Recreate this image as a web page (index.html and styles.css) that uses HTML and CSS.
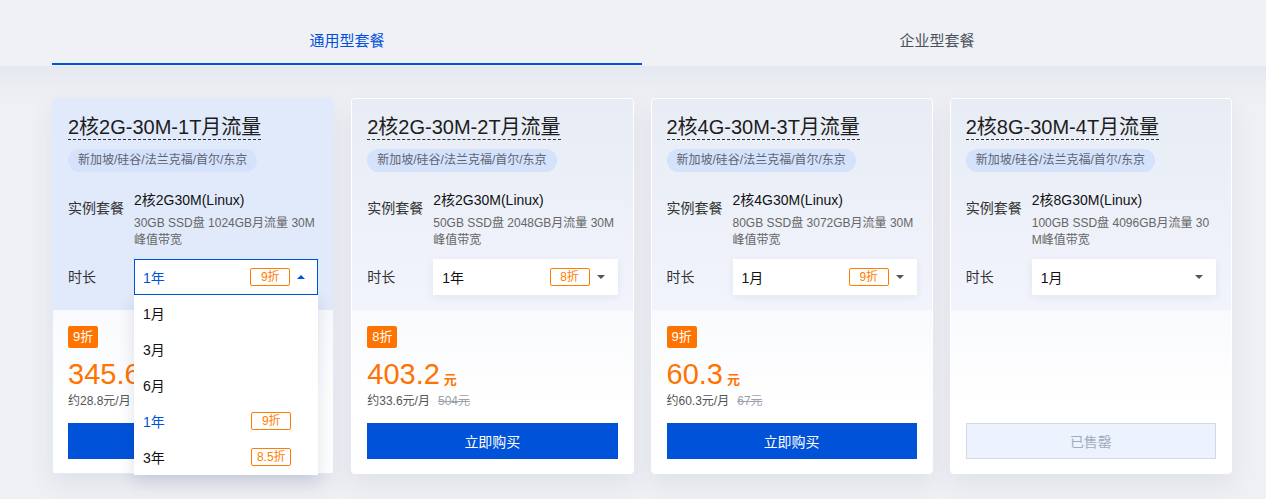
FILE: index.html
```html
<!DOCTYPE html>
<html lang="zh-CN">
<head>
<meta charset="utf-8">
<title>套餐</title>
<link rel="stylesheet" href="styles.css">
</head>
<body>
<div class="tabs">
  <div class="tab active">通用型套餐</div>
  <div class="tab">企业型套餐</div>
</div>
<div class="main">
  <div class="cards">
    <div class="card card-active">
      <div class="card-top">
        <div class="title"><span>2核2G-30M-1T月流量</span></div>
        <div class="tag">新加坡/硅谷/法兰克福/首尔/东京</div>
        <div class="row">
          <div class="label label-top">实例套餐</div>
          <div class="value">
            <div class="spec">2核2G30M(Linux)</div>
            <div class="desc">30GB SSD盘 1024GB月流量 30M峰值带宽</div>
          </div>
        </div>
        <div class="row row-center">
          <div class="label">时长</div>
          <div class="select select-open">
            <span class="sel-text">1年</span>
            <span class="off">9折</span>
            <span class="arrow arrow-up"></span>
            <div class="dropdown">
              <div class="opt">1月</div>
              <div class="opt">3月</div>
              <div class="opt">6月</div>
              <div class="opt opt-on">1年<span class="off">9折</span></div>
              <div class="opt">3年<span class="off">8.5折</span></div>
            </div>
          </div>
        </div>
      </div>
      <div class="card-bottom">
        <div class="badge">9折</div>
        <div class="price">345.6<span class="unit">元</span></div>
        <div class="monthly">约28.8元/月</div>
        <button class="buy">立即购买</button>
      </div>
    </div>

    <div class="card">
      <div class="card-top">
        <div class="title"><span>2核2G-30M-2T月流量</span></div>
        <div class="tag">新加坡/硅谷/法兰克福/首尔/东京</div>
        <div class="row">
          <div class="label label-top">实例套餐</div>
          <div class="value">
            <div class="spec">2核2G30M(Linux)</div>
            <div class="desc">50GB SSD盘 2048GB月流量 30M峰值带宽</div>
          </div>
        </div>
        <div class="row row-center">
          <div class="label">时长</div>
          <div class="select">
            <span class="sel-text">1年</span>
            <span class="off">8折</span>
            <span class="arrow"></span>
          </div>
        </div>
      </div>
      <div class="card-bottom">
        <div class="badge">8折</div>
        <div class="price">403.2<span class="unit">元</span></div>
        <div class="monthly">约33.6元/月<s class="orig">504元</s></div>
        <button class="buy">立即购买</button>
      </div>
    </div>

    <div class="card">
      <div class="card-top">
        <div class="title"><span>2核4G-30M-3T月流量</span></div>
        <div class="tag">新加坡/硅谷/法兰克福/首尔/东京</div>
        <div class="row">
          <div class="label label-top">实例套餐</div>
          <div class="value">
            <div class="spec">2核4G30M(Linux)</div>
            <div class="desc">80GB SSD盘 3072GB月流量 30M峰值带宽</div>
          </div>
        </div>
        <div class="row row-center">
          <div class="label">时长</div>
          <div class="select">
            <span class="sel-text">1月</span>
            <span class="off">9折</span>
            <span class="arrow"></span>
          </div>
        </div>
      </div>
      <div class="card-bottom">
        <div class="badge">9折</div>
        <div class="price">60.3<span class="unit">元</span></div>
        <div class="monthly">约60.3元/月<s class="orig">67元</s></div>
        <button class="buy">立即购买</button>
      </div>
    </div>

    <div class="card">
      <div class="card-top">
        <div class="title"><span>2核8G-30M-4T月流量</span></div>
        <div class="tag">新加坡/硅谷/法兰克福/首尔/东京</div>
        <div class="row">
          <div class="label label-top">实例套餐</div>
          <div class="value">
            <div class="spec">2核8G30M(Linux)</div>
            <div class="desc">100GB SSD盘 4096GB月流量 30M峰值带宽</div>
          </div>
        </div>
        <div class="row row-center">
          <div class="label">时长</div>
          <div class="select">
            <span class="sel-text">1月</span>
            <span class="arrow"></span>
          </div>
        </div>
      </div>
      <div class="card-bottom">
        <button class="buy sold">已售罄</button>
      </div>
    </div>
  </div>
</div>
</body>
</html>
```

FILE: styles.css
```css
* { box-sizing: border-box; }
html, body { margin: 0; padding: 0; }
body {
  font-family: "Liberation Sans", "Noto Sans CJK SC", sans-serif;
  background: #eff0f4;
  color: #1f1f1f;
  width: 1266px;
  height: 499px;
  overflow: hidden;
}

.tabs {
  display: flex;
  height: 66px;
  padding: 0 34px 0 52px;
  background: #f0f1f5;
}
.tab {
  flex: 1;
  text-align: center;
  font-size: 15px;
  line-height: 22px;
  padding-top: 30px;
  color: #4b5160;
  border-bottom: 2px solid transparent;
  height: 65px;
}
.tab.active {
  color: #0052d9;
  border-bottom-color: #0052d9;
}

.main {
  background: linear-gradient(#e5e8f0 0, #eceef3 24px, #eff0f4 40px, #eff0f4 100%);
  padding: 32px 34px 0 52px;
  height: 433px;
}
.cards {
  display: grid;
  grid-template-columns: repeat(4, 1fr);
  gap: 17px;
}
.card {
  display: flex;
  flex-direction: column;
  border-radius: 4px;
  background: #fff;
  border: 1px solid #fff;
  box-shadow: 0 10px 24px rgba(40, 60, 110, 0.08);
  height: 376px;
}
.card-active { border-color: #e1eafb; }

.card-top {
  padding: 16px 15px 15px;
  background: linear-gradient(#e8ecf5, #f1f4fc);
  border-radius: 3px 3px 0 0;
}
.card-active .card-top { background: #e1eafb; }

.title { line-height: 24px; font-size: 20px; }
.title span {
  display: inline-block;
  border-bottom: 1px dashed #333;
  color: #1c1c1c;
}
.tag {
  display: inline-block;
  margin-top: 9px;
  height: 23px;
  line-height: 23px;
  padding: 0 10px;
  border-radius: 12px;
  background: #d4e2fb;
  color: #5d6472;
  font-size: 12px;
}

.row { display: flex; margin-top: 18px; }
.row-center { align-items: center; margin-top: 10px; }
.label {
  width: 66px;
  flex: none;
  font-size: 14px;
  line-height: 20px;
  color: #333;
}
.label-top { padding-top: 8px; }
.value { flex: 1; min-width: 0; }
.spec { font-size: 14px; line-height: 20px; color: #111; }
.desc {
  margin-top: 5px;
  font-size: 12px;
  line-height: 17px;
  color: #666;
  word-break: break-all;
}

.select {
  position: relative;
  flex: 1;
  height: 36px;
  display: flex;
  align-items: center;
  padding: 0 13px 0 9px;
  background: #fff;
  box-shadow: 0 2px 8px rgba(30, 50, 100, 0.07);
  font-size: 14px;
  color: #111;
}
.select-open {
  border: 1px solid #0052d9;
  padding: 0 12px 0 8px;
  box-shadow: none;
}
.select-open .sel-text { color: #0052d9; }
.sel-text { flex: 1; }
.off {
  display: inline-block;
  min-width: 40px;
  height: 18px;
  line-height: 16px;
  padding: 0 3px;
  border: 1px solid #ff7d00;
  border-radius: 2px;
  color: #ff7d00;
  font-size: 12px;
  text-align: center;
  margin-right: 7px;
}
.arrow {
  width: 0;
  height: 0;
  border-left: 4px solid transparent;
  border-right: 4px solid transparent;
  border-top: 4px solid #555;
}
.arrow-up {
  border-top: none;
  border-bottom: 4px solid #0052d9;
}

.dropdown {
  position: absolute;
  top: 35px;
  left: -1px;
  right: -1px;
  background: #fff;
  box-shadow: 0 6px 16px rgba(20, 40, 90, 0.14);
  z-index: 5;
}
.opt {
  height: 36px;
  display: flex;
  align-items: center;
  justify-content: space-between;
  padding: 0 20px 0 9px;
  font-size: 14px;
  color: #111;
}
.opt-on { color: #0052d9; }

.card-bottom {
  flex: 1;
  display: flex;
  flex-direction: column;
  align-items: flex-start;
  padding: 16px 15px 14px;
  background: linear-gradient(#f9fafd, #ffffff 60%);
  border-radius: 0 0 3px 3px;
}
.badge {
  height: 22px;
  line-height: 22px;
  padding: 0 5px;
  background: #ff7300;
  color: #fff;
  font-size: 13px;
  border-radius: 2px;
}
.price {
  margin-top: 10px;
  height: 32px;
  line-height: 32px;
  font-size: 29px;
  color: #ff7300;
}
.unit {
  font-size: 13px;
  font-weight: bold;
  margin-left: 4px;
}
.monthly {
  margin-top: 2px;
  line-height: 18px;
  font-size: 12px;
  color: #555;
}
.orig {
  margin-left: 8px;
  color: #9ba1ad;
}
.buy {
  margin-top: auto;
  width: 100%;
  height: 36px;
  border: none;
  background: #0052d9;
  color: #fff;
  font-family: inherit;
  font-size: 14px;
  cursor: pointer;
}
.buy.sold {
  background: #ecf2fe;
  border: 1px solid #d3d9e4;
  color: #a3acbd;
}
```
